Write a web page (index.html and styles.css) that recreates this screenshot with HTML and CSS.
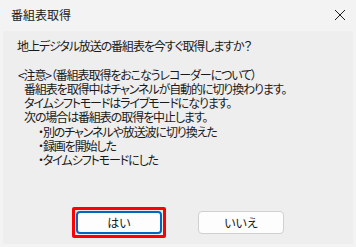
FILE: index.html
```html
<!DOCTYPE html>
<html lang="ja">
<head>
  <meta charset="UTF-8">
  <title>番組表取得</title>
  <link rel="stylesheet" href="styles.css">
</head>
<body>
  <div class="dialog">
    <div class="title-bar">
      <span class="title">番組表取得</span>
      <span class="close-btn">
        <svg width="12" height="12" viewBox="0 0 12 12">
          <path d="M1 1 L11 11 M11 1 L1 11" stroke="#1b1b1b" stroke-width="1" fill="none"/>
        </svg>
      </span>
    </div>
    <div class="panel">
      <div class="message">
        <p class="line">地上デジタル放送の番組表を今すぐ取得しますか？</p>
        <p class="line blank"></p>
        <p class="line note">&lt;注意&gt;（番組表取得をおこなうレコーダーについて）</p>
        <p class="line sub">番組表を取得中はチャンネルが自動的に切り換わります。</p>
        <p class="line sub">タイムシフトモードはライブモードになります。</p>
        <p class="line sub">次の場合は番組表の取得を中止します。</p>
        <p class="line bullet">・別のチャンネルや放送波に切り換えた</p>
        <p class="line bullet">・録画を開始した</p>
        <p class="line bullet">・タイムシフトモードにした</p>
      </div>
      <div class="buttons">
        <div class="highlight">
          <button class="btn btn-default">はい</button>
        </div>
        <button class="btn">いいえ</button>
      </div>
    </div>
  </div>
</body>
</html>
```

FILE: styles.css
```css
body {
  margin: 0;
  padding: 0;
  background-color: #f3f3f3;
  font-family: "Noto Sans CJK JP", "Noto Sans", sans-serif;
  font-feature-settings: "palt";
  color: #1a1a1a;
}

.dialog {
  width: 356px;
  height: 247px;
  display: flex;
  flex-direction: column;
}

.title-bar {
  height: 31px;
  display: flex;
  align-items: center;
  justify-content: space-between;
  padding: 0 10px 0 11px;
}

.title {
  font-size: 12px;
  line-height: 14px;
  padding-bottom: 1px;
}

.close-btn {
  display: flex;
  align-items: center;
  padding-bottom: 1px;
}

.panel {
  margin: 0 3px;
  height: 213px;
  background-color: #eeeeee;
  display: flex;
  flex-direction: column;
}

.message {
  padding: 8px 0 0 14px;
}

.line {
  margin: 0;
  font-size: 12px;
  line-height: 14.3px;
  height: 14.3px;
  letter-spacing: -1.1px;
  white-space: nowrap;
}

.note {
  padding-left: 1px;
}

.sub {
  padding-left: 7px;
}

.bullet {
  padding-left: 21px;
}

.buttons {
  margin-top: auto;
  padding-bottom: 6px;
  display: flex;
  justify-content: center;
  align-items: center;
  gap: 32px;
}

.highlight {
  border: 3px solid #ff0000;
  border-radius: 2px;
  padding: 1px;
  display: flex;
}

.btn {
  width: 86px;
  height: 23px;
  box-sizing: border-box;
  background-color: #fdfdfd;
  border: 1px solid #d0d0d0;
  border-radius: 4px;
  font-family: "Noto Sans CJK JP", sans-serif;
  font-feature-settings: "palt";
  font-size: 12px;
  color: #1a1a1a;
  padding: 0;
}

.btn-default {
  border: 2px solid #0067c0;
}
```
